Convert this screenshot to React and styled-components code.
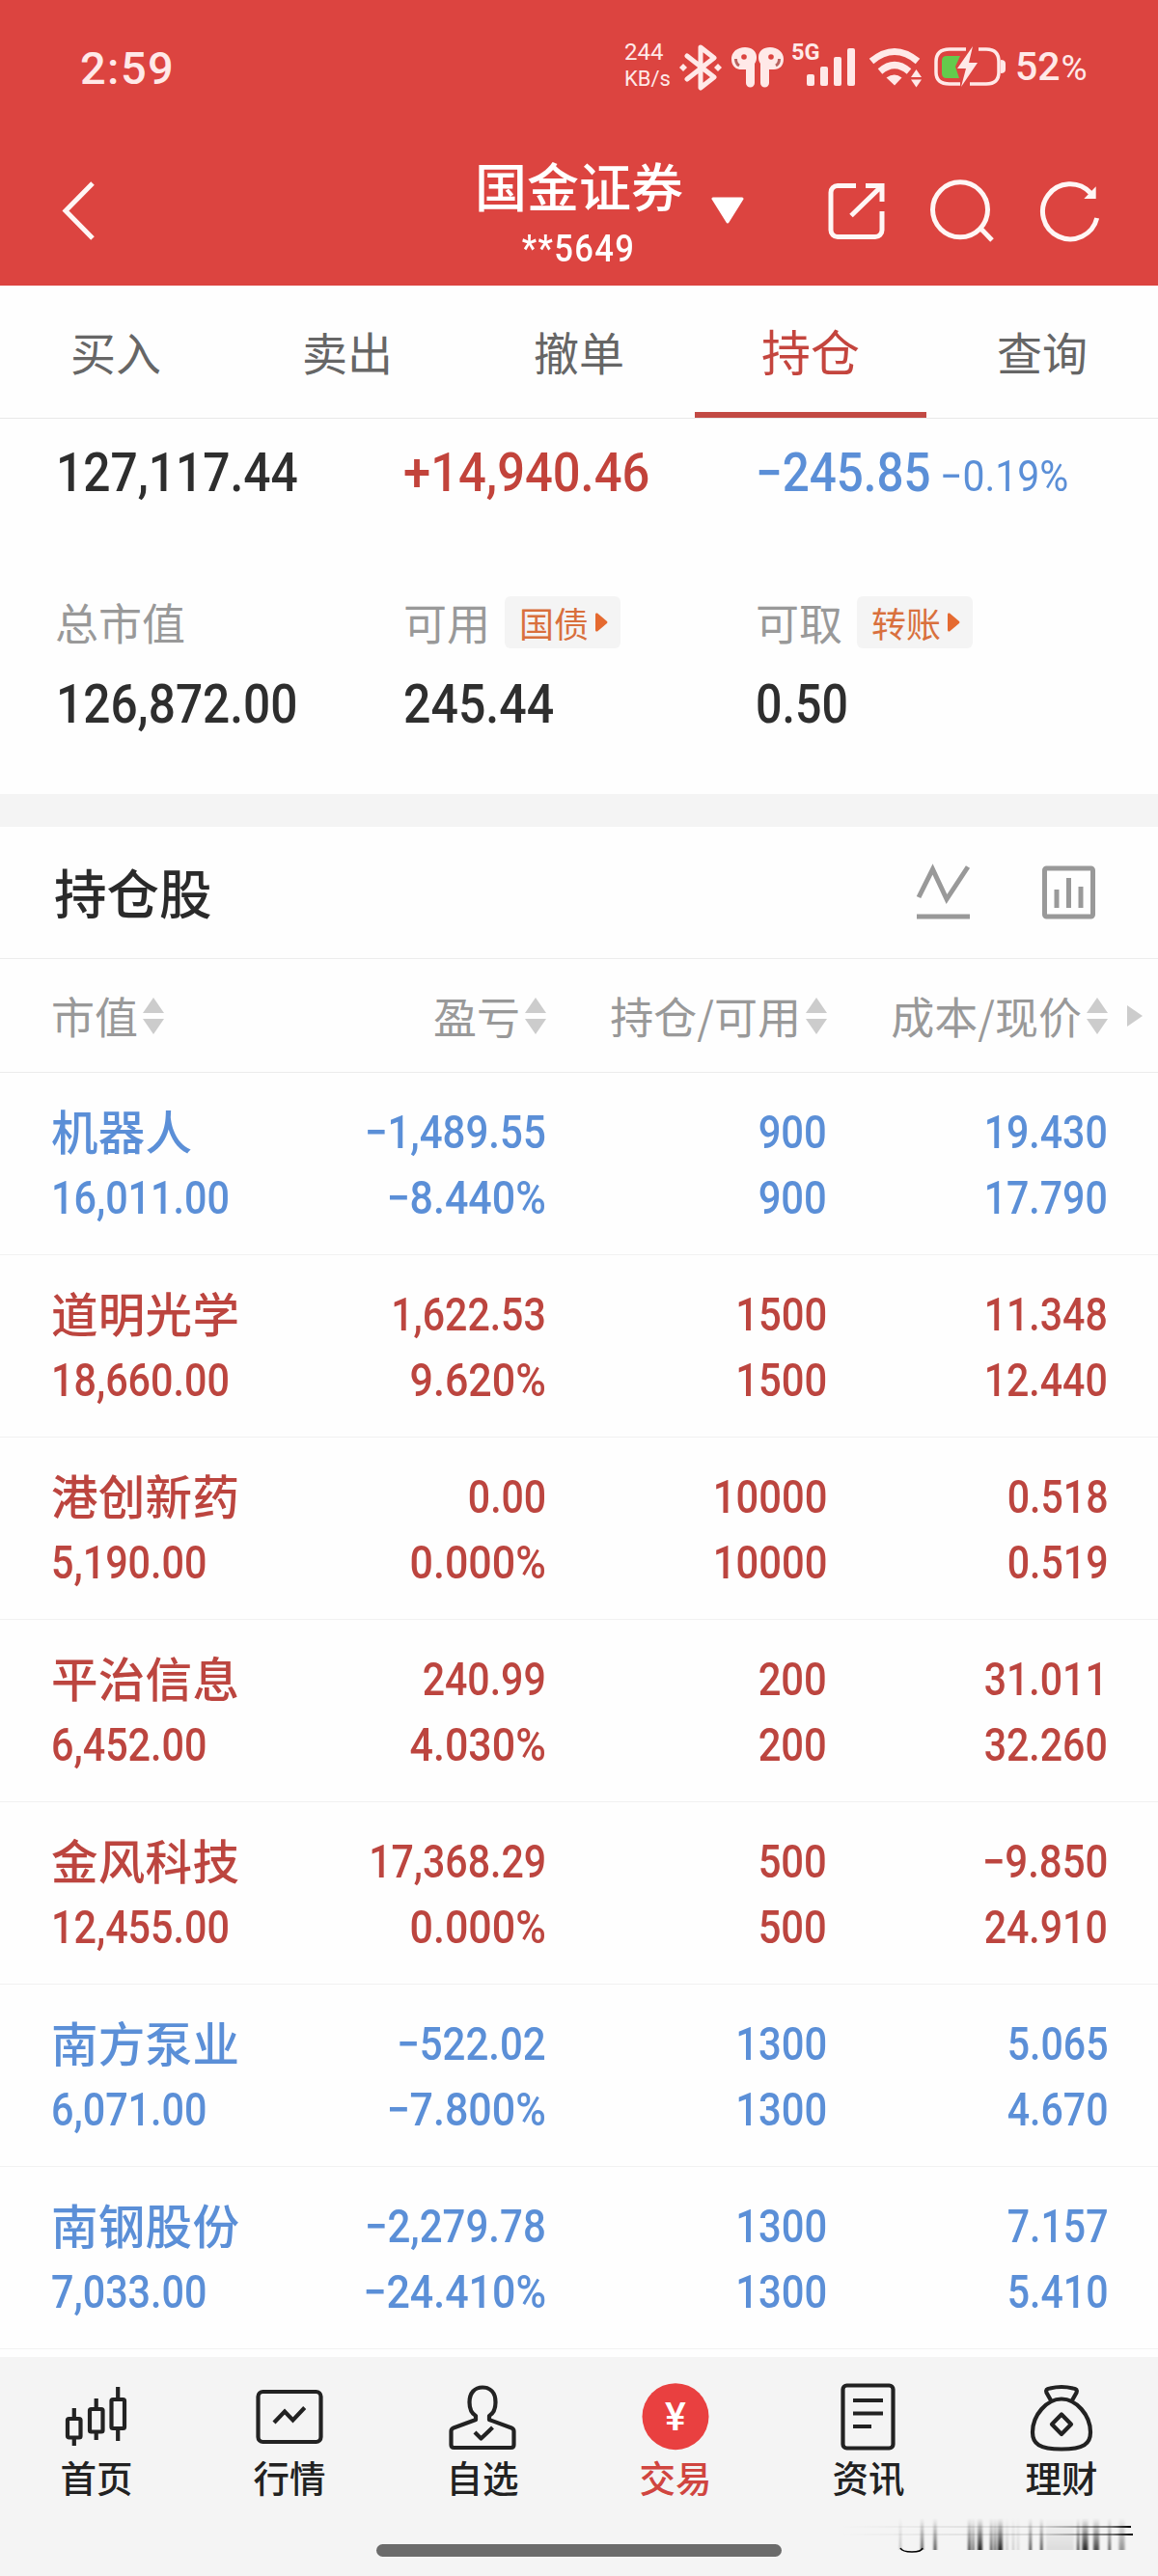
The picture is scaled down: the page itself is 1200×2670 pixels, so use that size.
import React from 'react';
import styled, { createGlobalStyle } from 'styled-components';

const GlobalStyle = createGlobalStyle`
  * {
    box-sizing: border-box;
  }

  body {
    margin: 0;
    background: #fefefe;
    color: #2a2a2a;
    font-family: 'Noto Sans CJK SC', sans-serif;
  }

  svg {
    display: block;
    flex: none;
  }
`;

const colors = {
  header: '#dc4440',
  up: '#bc453f',
  down: '#5b8fd7',
  grey: '#999',
  line: '#ececec',
};

const Screen = styled.div`
  width: 1200px;
  height: 2670px;
  display: flex;
  flex-direction: column;
  overflow: hidden;
`;

/* condensed figures used for every amount on the page */
const Num = styled.span`
  display: inline-block;
  font-family: 'Roboto', 'Noto Sans CJK SC', sans-serif;
  font-size: ${(p) => p.$size || 48}px;
  font-weight: ${(p) => p.$weight || 500};
  letter-spacing: ${(p) => p.$track || 0}px;
  white-space: nowrap;
  transform: scaleX(${(p) => p.$scale || 0.87});
  transform-origin: ${(p) => p.$origin || 'left'} center;
`;

const Top = styled.header`
  height: 296px;
  background: ${colors.header};
  color: #fff;
`;

const StatusBar = styled.div`
  height: 120px;
  padding: 20px 72px 0 83px;
  display: flex;
  align-items: center;
  color: #ffe9e8;
  font-family: 'Roboto', sans-serif;
`;

const Clock = styled.div`
  flex: 1;
  font-size: 47px;
  font-weight: 500;
  letter-spacing: 1.4px;
`;

const Speed = styled.div`
  width: 53px;
  font-size: 23px;
  line-height: 27px;
  margin: -4px 4px 0 0;
`;

const Rate = styled.div`
  font-size: ${(p) => p.$size}px;
`;

const Spacer = styled.div`
  width: ${(p) => p.$width}px;
`;

const Percent = styled.div`
  width: 76px;
  margin-left: 8px;
  font-size: 41px;
  font-weight: 500;
  line-height: 48px;
  white-space: nowrap;

  small {
    font-size: 37px;
    font-weight: 400;
    margin-left: 1px;
  }
`;

const NavBar = styled.div`
  height: 176px;
  display: grid;
  grid-template-columns: 492px 216px 1fr;
`;

const Back = styled.div`
  padding: 64px 0 0 63px;
`;

const Title = styled.div`
  text-align: center;
  font-size: 54px;
  font-weight: 500;
  line-height: 72px;
  padding-top: 36px;
  white-space: nowrap;
`;

const Account = styled.div`
  font-size: 38px;
  line-height: 50px;
  margin-top: 2px;
`;

const Actions = styled.div`
  display: flex;
  padding-top: 64px;

  svg:first-child {
    margin: 18px 84px 0 28px;
  }

  svg:nth-child(3) {
    margin-left: 41px;
  }

  svg:nth-child(4) {
    margin-left: 45px;
  }
`;

const Tabs = styled.nav`
  height: 138px;
  display: grid;
  grid-template-columns: repeat(5, 1fr);
  border-bottom: 1px solid #e8e8e8;
`;

const Tab = styled.div`
  text-align: center;
  font-size: ${(p) => (p.$active ? 51 : 47)}px;
  line-height: 135px;
  height: 137px;
  color: ${(p) => (p.$active ? '#c4453e' : '#666')};
  border-bottom: ${(p) => (p.$active ? '6px solid #c24a44' : 'none')};
`;

const Summary = styled.section`
  height: 389px;
  padding: 26px 0 0 57px;
`;

const SummaryRow = styled.div`
  display: grid;
  grid-template-columns: 361px 365px 1fr;
  height: ${(p) => p.$height}px;
  margin-top: ${(p) => p.$gap || 0}px;
  line-height: ${(p) => p.$height}px;
`;

const Figure = styled.div`
  color: ${(p) => p.$color || '#2e2e2e'};
  display: flex;
  align-items: baseline;
  padding-left: ${(p) => p.$inset || 0}px;

  ${Num} + ${Num} {
    margin-left: -12px;
  }
`;

const Label = styled.div`
  display: flex;
  align-items: center;
  font-size: 45px;
  color: ${colors.grey};
`;

const Badge = styled.span`
  display: flex;
  align-items: center;
  gap: 6px;
  height: 54px;
  width: 120px;
  margin-left: 15px;
  padding-left: 15px;
  border-radius: 6px;
  background: #f4f4f4;
  color: #d9703d;
  font-size: 36px;
`;

const Gap = styled.div`
  height: 34px;
  background: #f4f4f4;
`;

const SectionHead = styled.div`
  height: 137px;
  padding: 0 64px 0 56px;
  display: flex;
  align-items: center;
  border-bottom: 1px solid ${colors.line};

  svg + svg {
    margin-left: 71px;
  }
`;

const SectionTitle = styled.h2`
  flex: 1;
  margin: -4px 0 0;
  font-size: 54.5px;
  font-weight: 500;
`;

const Grid = styled.div`
  display: grid;
  grid-template-columns: 266px 247px 291px 291px 1fr;
  padding-left: 53px;
`;

const HeadRow = styled(Grid)`
  height: 118px;
  align-items: center;
  border-bottom: 1px solid ${colors.line};
`;

const HeadCell = styled.div`
  display: flex;
  align-items: center;
  justify-content: ${(p) => (p.$left ? 'flex-start' : 'flex-end')};
  gap: 5px;
  font-size: 45px;
  color: ${colors.grey};
  white-space: nowrap;
`;

const StockRow = styled(Grid)`
  height: 189px;
  padding-top: 28px;
  border-bottom: 1px solid #f1f1f1;
  color: ${(p) => (p.$down ? colors.down : colors.up)};
`;

const Cell = styled.div`
  display: flex;
  flex-direction: column;
  align-items: ${(p) => (p.$left ? 'flex-start' : 'flex-end')};
  line-height: 68px;
`;

const StockName = styled.span`
  font-size: 48.5px;
  font-weight: 500;
  letter-spacing: 0.3px;
  white-space: nowrap;
  margin: -3px 0 3px;
`;

const TabBar = styled.footer`
  position: relative;
  height: 227px;
  margin-top: auto;
  background: #f4f4f4;
`;

const TabItems = styled.div`
  display: grid;
  grid-template-columns: repeat(6, 1fr);
  padding-top: 27px;
`;

const TabItem = styled.div`
  display: flex;
  flex-direction: column;
  align-items: center;
  font-size: 37.5px;
  font-weight: 500;
  line-height: 50px;
  color: ${(p) => (p.$active ? '#d0453f' : '#222')};
`;

const HomeIndicator = styled.div`
  width: 420px;
  height: 13px;
  margin: 45px auto 0;
  border-radius: 7px;
  background: #6b6b6b;
`;

const Smudge = styled.svg`
  position: absolute;
  right: 10px;
  bottom: 0;
`;

const BluetoothIcon = () => (
  <svg width="44" height="48" fill="none" stroke="#ffe9e8" strokeWidth="5" strokeLinejoin="round" strokeLinecap="round">
    <path d="M8 12L36 34L22 45V3L36 14L8 36" />
    <path d="M4 20l4 4-4 4-4-4zM40 20l4 4-4 4-4-4z" fill="#ffe9e8" stroke="none" />
  </svg>
);

const EarbudsIcon = () => (
  <svg width="54" height="48" fill="#ffe9e8">
    <path d="M14 3C6 3 0 8 0 15c0 7 4 11 10 11h5v14a4.500 4.500 0 0 0 9 0V20c2-3 2-5 2-7 0-6-5-10-12-10z" />
    <path d="M40 3c8 0 14 5 14 12 0 7-4 11-10 11h-5v14a4.500 4.500 0 0 1-9 0V20c-2-3-2-5-2-7 0-6 5-10 12-10z" />
    <circle cx="13" cy="13" r="2.800" fill={colors.header} />
    <circle cx="41" cy="13" r="2.800" fill={colors.header} />
    <path d="M4.500 15q0 5 3.500 7M49.500 15q0 5-3.500 7" fill="none" stroke="#b86360" strokeWidth="3" />
  </svg>
);

const SignalIcon = () => (
  <svg width="68" height="64" viewBox="0 -8 68 64" fill="#ffe9e8">
    <text x="0" y="16" fontFamily="Roboto" fontWeight="700" fontSize="23.500">5G</text>
    <rect x="16" y="31" width="8" height="12" rx="2" />
    <rect x="30" y="23" width="8" height="20" rx="2" />
    <rect x="44" y="13" width="8" height="30" rx="2" />
    <rect x="58" y="4" width="8" height="39" rx="2" />
  </svg>
);

const WifiIcon = () => (
  <svg width="56" height="48" fill="none" stroke="#ffe9e8" strokeWidth="7">
    <path d="M3 17.500Q27 -2.500 51 17.500" />
    <path d="M12 28Q27 15 42 28" />
    <path d="M18.500 34.500q8.500-6 16 0L27 42.500z" fill="#ffe9e8" stroke="none" />
    <path d="M44 34l5.500-8 5.500 8zM44 36.500l5.500 8 5.500-8z" fill="#ffe9e8" stroke="none" />
  </svg>
);

const BatteryIcon = () => (
  <svg width="76" height="48" fill="none" stroke="#ffe9e8" strokeWidth="3.500">
    <path d="M33 5H16Q2 5 2 18V29Q2 41 16 41H27M46 5H54Q67 5 67 18V29Q67 41 54 41H37" />
    <path d="M13 12H27L22 23 26 35H13Q8 35 8 30V17Q8 12 13 12Z" fill="#64cb4c" stroke="none" />
    <path d="M69 16q5 0 5 4v6q0 4-5 4z" fill="#ffe9e8" stroke="none" />
    <path d="M40 2L24 25H33L28 44L45 19H36z" fill="#ffe9e8" stroke="none" />
  </svg>
);

const BackIcon = () => (
  <svg width="36" height="66" fill="none" stroke="#fff6f5" strokeWidth="5">
    <path d="M33 6L5 34.500L33 63" />
  </svg>
);

const CaretIcon = () => (
  <svg width="36" height="30" fill="#fff" stroke="#fff" strokeWidth="3" strokeLinejoin="round">
    <path d="M3 4H33L18 28z" />
  </svg>
);

const ShareIcon = () => (
  <svg width="66" height="68" fill="none" stroke="#fff6f5" strokeWidth="5">
    <path d="M31 8.500H12a7 7 0 0 0-7 7V54.500a7 7 0 0 0 7 7H51a7 7 0 0 0 7-7V35" />
    <path d="M41 8.500H58V25M57 9.500L26 39.500" />
  </svg>
);

const SearchIcon = () => (
  <svg width="68" height="68" fill="none" stroke="#fff6f5" strokeWidth="5">
    <circle cx="32" cy="33.300" r="28.500" />
    <path d="M53 52.500L65 65" />
  </svg>
);

const RefreshIcon = () => (
  <svg width="66" height="68" fill="none" stroke="#fff6f5" strokeWidth="5">
    <path d="M54 16A28.500 28.500 0 1 0 60.700 42" />
    <path d="M59.700 9.300V22H47.300z" fill="#fff6f5" stroke="none" />
  </svg>
);

const BadgeArrow = () => (
  <svg width="14" height="20" fill="#e56a30">
    <path d="M1 1.500Q1 0 3 .5L13 9Q14 10 13 11L3 19.500Q1 20 1 18z" />
  </svg>
);

const TrendIcon = () => (
  <svg width="58" height="60" fill="none" stroke="#999" strokeWidth="5">
    <path d="M3 35L17.500 6L32 37L54 3.500M1 55H56" />
  </svg>
);

const BarsIcon = () => (
  <svg width="58" height="60" fill="none" stroke="#999" strokeWidth="5">
    <rect x="4.500" y="5" width="50" height="50" rx="2" />
    <path d="M17 27V46M29.500 15V46M42 24V46" />
  </svg>
);

const SortIcon = () => (
  <svg width="22" height="38" fill="#ccc">
    <path d="M0 16L11 0l11 16zM0 22L11 38l11-16z" />
  </svg>
);

const MoreArrow = () => (
  <svg width="36" height="22" fill="#ccc">
    <path d="M20 0L36 11L20 22z" />
  </svg>
);

const navStroke = { width: 72, height: 72, fill: 'none', stroke: '#222', strokeWidth: 4.2 };

const HomeIcon = () => (
  <svg {...navStroke}>
    <rect x="6" y="37" width="13.500" height="19.500" rx="1.500" />
    <rect x="29" y="27" width="13.500" height="23.500" rx="1.500" />
    <rect x="51.500" y="17" width="13.500" height="30" rx="1.500" />
    <path d="M12.800 26V37M12.800 57V65M35.700 16V27M35.700 51V59M58.200 4V17M58.200 47V60" />
  </svg>
);

const MarketIcon = () => (
  <svg {...navStroke}>
    <rect x="3.500" y="9" width="65" height="52" rx="5" />
    <path d="M20 41L31 29.500L39.500 38.500L51.700 25.500" />
  </svg>
);

const WatchIcon = () => (
  <svg {...navStroke} strokeLinejoin="round">
    <path d="M29 34C24 31 22.500 26 22.500 20C22.500 10 28 4.500 36 4.500S49.500 10 49.500 20C49.500 26 48 31 43 34V38L66 46.500Q68.500 47.500 68.500 50V64q0 3-3 3H6.500q-3 0-3-3V50q0-2.500 2.500-3.500L29 38z" />
    <path d="M28 51L34.500 57.500L46.500 46" />
  </svg>
);

const TradeIcon = () => (
  <svg width="72" height="72">
    <circle cx="36" cy="34.700" r="34.500" fill="#e94040" />
    <text x="36" y="49" textAnchor="middle" fill="#fff" fontFamily="Roboto" fontWeight="500" fontSize="41">¥</text>
  </svg>
);

const NewsIcon = () => (
  <svg {...navStroke}>
    <rect x="9.500" y="2.500" width="52" height="65" rx="4" />
    <path d="M20 18H51M20 31.500H51M20 45H39" />
  </svg>
);

const WealthIcon = () => (
  <svg {...navStroke} strokeLinejoin="round">
    <path d="M25 18L20.500 10Q19 6 24 5.500Q36 2.500 48 5.500Q53 6 51.500 10L47 18" />
    <path d="M36 16.500C21 16.500 6 33 6 51C6 63 13 68.500 36 68.500S66 63 66 51C66 33 51 16.500 36 16.500Z" />
    <path d="M36 32.500L46 42.700L36 53L26 42.700Z" />
  </svg>
);

const tabs = ['买入', '卖出', '撤单', '持仓', '查询'];

const stocks = [
  ['机器人', '16,011.00', '−1,489.55', '−8.440%', '900', '19.430', '17.790', true],
  ['道明光学', '18,660.00', '1,622.53', '9.620%', '1500', '11.348', '12.440'],
  ['港创新药', '5,190.00', '0.00', '0.000%', '10000', '0.518', '0.519'],
  ['平治信息', '6,452.00', '240.99', '4.030%', '200', '31.011', '32.260'],
  ['金风科技', '12,455.00', '17,368.29', '0.000%', '500', '−9.850', '24.910'],
  ['南方泵业', '6,071.00', '−522.02', '−7.800%', '1300', '5.065', '4.670', true],
  ['南钢股份', '7,033.00', '−2,279.78', '−24.410%', '1300', '7.157', '5.410', true],
];

const navItems = [
  ['首页', HomeIcon],
  ['行情', MarketIcon],
  ['自选', WatchIcon],
  ['交易', TradeIcon],
  ['资讯', NewsIcon],
  ['理财', WealthIcon],
];

// x, width, opacity of the streaks in the bottom corner
const streaks = [
  [82, 2, 0.25],
  [104, 3, 0.6],
  [117.5, 3, 0.7],
  [153, 3, 0.7],
  [157, 3, 0.5],
  [163, 5, 0.85],
  [176, 2.5, 0.7],
  [180, 2.5, 0.6],
  [184, 5, 0.85],
  [192, 3, 0.15],
  [199, 2, 0.2],
  [204, 2, 0.15],
  [216.5, 2.5, 0.75],
  [228, 2.5, 0.75],
  [234, 29, 0.1],
  [266, 2.5, 0.75],
  [271.5, 6, 0.85],
  [283, 6, 0.7],
  [298.5, 2.5, 0.7],
  [309.5, 6, 0.4],
];

const StreakArt = () => (
  <Smudge width="340" height="70">
    <defs>
      <linearGradient id="fall" x1="0" y1="0" x2="0" y2="1">
        <stop offset="0" stopColor="#000" stopOpacity="0" />
        <stop offset="0.5" stopColor="#000" stopOpacity="0.5" />
        <stop offset="1" stopColor="#000" />
      </linearGradient>
      <linearGradient id="sweep" x1="0" y1="0" x2="1" y2="0">
        <stop offset="0" stopColor="#000" stopOpacity="0" />
        <stop offset="0.7" stopColor="#000" stopOpacity="0.12" />
        <stop offset="0.93" stopColor="#000" stopOpacity="0.5" />
        <stop offset="1" stopColor="#000" />
      </linearGradient>
      <filter id="soft">
        <feGaussianBlur stdDeviation="0.8 0" />
      </filter>
    </defs>
    <g filter="url(#soft)">
      {streaks.map(([x, w, o]) => (
        <rect key={x} x={x} y="10" width={w} height="33" fill="url(#fall)" opacity={o} />
      ))}
    </g>
    <rect x="20" y="18" width="302" height="2" fill="url(#sweep)" />
    <rect x="20" y="26" width="304" height="2" fill="url(#sweep)" />
    <path d="M83 41Q85 45 95 45T106 41" fill="none" stroke="#000" strokeWidth="1.500" />
  </Smudge>
);

// percentages and signed amounts run a little wider than plain ones
const widthOf = (text) => {
  if (text.endsWith('%')) return 0.895;
  if (text.startsWith('−')) return 0.875;
  return 0.855;
};

const Amount = ({ children }) => (
  <Num $origin="right" $scale={widthOf(children)}>
    {children}
  </Num>
);

const App = () => {
  return (
    <Screen>
      <GlobalStyle />
      <Top>
        <StatusBar>
          <Clock>2:59</Clock>
          <Speed>
            <Rate $size={24}>244</Rate>
            <Rate $size={22}>KB/s</Rate>
          </Speed>
          <BluetoothIcon />
          <Spacer $width={10} />
          <EarbudsIcon />
          <Spacer $width={8} />
          <SignalIcon />
          <Spacer $width={12} />
          <WifiIcon />
          <Spacer $width={12} />
          <BatteryIcon />
          <Percent>
            52<small>%</small>
          </Percent>
        </StatusBar>
        <NavBar>
          <Back>
            <BackIcon />
          </Back>
          <Title>
            国金证券
            <Account>
              <Num $size={38} $scale={0.91} $track={1.5} $origin="center">
                **5649
              </Num>
            </Account>
          </Title>
          <Actions>
            <CaretIcon />
            <ShareIcon />
            <SearchIcon />
            <RefreshIcon />
          </Actions>
        </NavBar>
      </Top>

      <Tabs>
        {tabs.map((name) => (
          <Tab key={name} $active={name === '持仓'}>
            {name}
          </Tab>
        ))}
      </Tabs>

      <Summary>
        <SummaryRow $height={60}>
          <Figure $inset={1}>
            <Num $size={55} $scale={0.903}>127,117.44</Num>
          </Figure>
          <Figure $color="#c2433b">
            <Num $size={55} $scale={0.922}>+14,940.46</Num>
          </Figure>
          <Figure $color={colors.down}>
            <Num $size={55} $scale={0.897}>−245.85</Num>
            <Num $size={45} $weight={400} $scale={0.91}>−0.19%</Num>
          </Figure>
        </SummaryRow>
        <SummaryRow $height={56} $gap={97}>
          <Label>总市值</Label>
          <Label>
            可用
            <Badge>
              国债
              <BadgeArrow />
            </Badge>
          </Label>
          <Label>
            可取
            <Badge>
              转账
              <BadgeArrow />
            </Badge>
          </Label>
        </SummaryRow>
        <SummaryRow $height={60} $gap={27}>
          <Figure $inset={1}>
            <Num $size={55} $scale={0.902}>126,872.00</Num>
          </Figure>
          <Figure>
            <Num $size={55} $scale={0.91}>245.44</Num>
          </Figure>
          <Figure>
            <Num $size={55} $scale={0.88}>0.50</Num>
          </Figure>
        </SummaryRow>
      </Summary>

      <Gap />

      <SectionHead>
        <SectionTitle>持仓股</SectionTitle>
        <TrendIcon />
        <BarsIcon />
      </SectionHead>
      <HeadRow>
        <HeadCell $left>
          市值
          <SortIcon />
        </HeadCell>
        <HeadCell>
          盈亏
          <SortIcon />
        </HeadCell>
        <HeadCell>
          持仓/可用
          <SortIcon />
        </HeadCell>
        <HeadCell>
          成本/现价
          <SortIcon />
        </HeadCell>
        <MoreArrow />
      </HeadRow>

      {stocks.map(([name, value, profit, rate, count, cost, price, down]) => (
        <StockRow key={name} $down={down}>
          <Cell $left>
            <StockName>{name}</StockName>
            <Num $scale={0.86}>{value}</Num>
          </Cell>
          <Cell>
            <Amount>{profit}</Amount>
            <Amount>{rate}</Amount>
          </Cell>
          <Cell>
            <Num $origin="right">{count}</Num>
            <Num $origin="right">{count}</Num>
          </Cell>
          <Cell>
            <Amount>{cost}</Amount>
            <Amount>{price}</Amount>
          </Cell>
        </StockRow>
      ))}

      <TabBar>
        <TabItems>
          {navItems.map(([name, Icon]) => (
            <TabItem key={name} $active={name === '交易'}>
              <Icon />
              {name}
            </TabItem>
          ))}
        </TabItems>
        <HomeIndicator />
        <StreakArt />
      </TabBar>
    </Screen>
  );
};

export default App;
